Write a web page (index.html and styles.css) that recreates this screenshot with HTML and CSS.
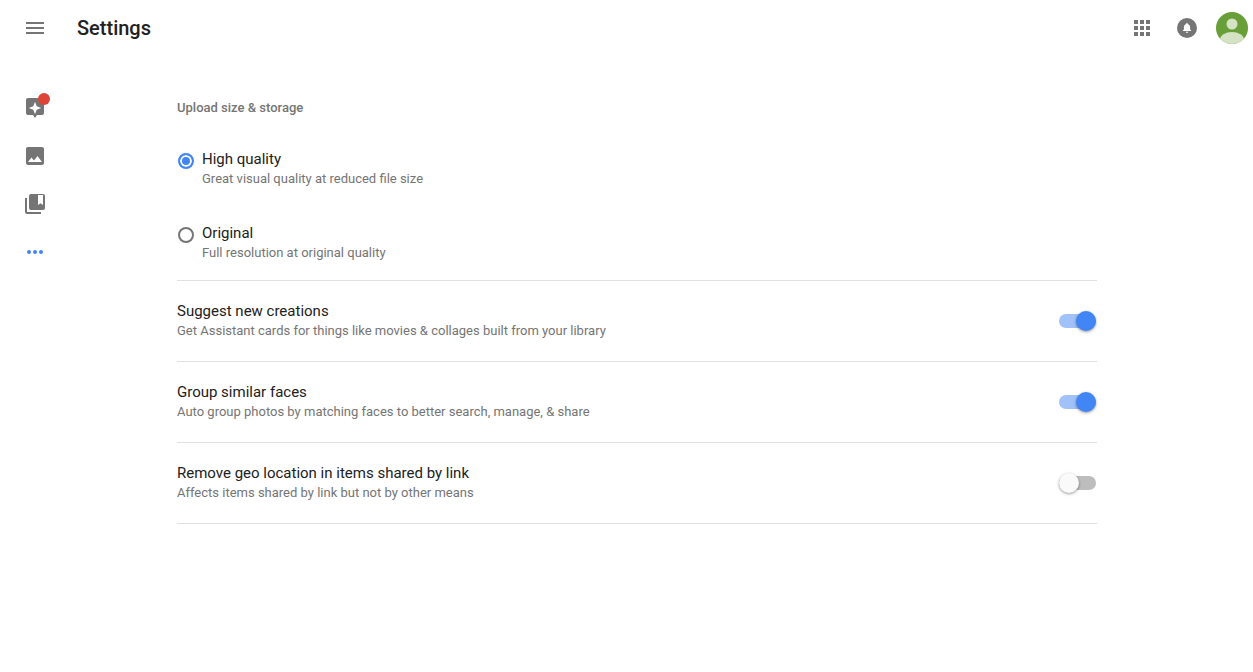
FILE: index.html
```html
<!DOCTYPE html>
<html lang="en">
<head>
<meta charset="utf-8">
<title>Settings</title>
<link rel="stylesheet" href="styles.css">
</head>
<body>
<header class="topbar">
  <button class="menu-btn" aria-label="Menu">
    <svg width="24" height="24" viewBox="0 0 24 24"><path class="ic" d="M3 18h18v-2H3v2zm0-5h18v-2H3v2zm0-7v2h18V6H3z"/></svg>
  </button>
  <h1 class="title">Settings</h1>
  <div class="actions">
    <svg class="act-apps" width="24" height="24" viewBox="0 0 24 24"><path class="ic" d="M4 8h4V4H4v4zm6 12h4v-4h-4v4zm-6 0h4v-4H4v4zm0-6h4v-4H4v4zm6 0h4v-4h-4v4zm6-10v4h4V4h-4zm-6 4h4V4h-4v4zm6 6h4v-4h-4v4zm0 6h4v-4h-4v4z"/></svg>
    <svg class="act-bell" width="24" height="24" viewBox="0 0 24 24"><circle class="ic" cx="12" cy="12" r="10"/><path fill="#fff" d="M12 6.800c-.4 0-.7.3-.7.7v.4C9.700 8.300 8.900 9.500 8.900 11.200v2.300l-1 1v.6h8.200v-.6l-1-1v-2.300c0-1.700-.8-2.900-2.400-3.300v-.4c0-.4-.3-.7-.7-.7zM12 17c.7 0 1.200-.5 1.200-1.200h-2.400c0 .7.5 1.200 1.200 1.200z"/></svg>
    <svg class="avatar" width="32" height="32" viewBox="0 0 32 32"><defs><clipPath id="av"><circle cx="16" cy="16" r="16"/></clipPath></defs><g clip-path="url(#av)"><rect width="32" height="32" fill="#689f38"/><circle cx="16" cy="12" r="5.5" fill="#d3e3c4"/><ellipse cx="16" cy="28" rx="12" ry="8" fill="#d3e3c4"/></g></svg>
  </div>
</header>
<div class="layout">
  <nav class="sidebar">
    <a class="nav-item badge-wrap">
      <svg width="24" height="24" viewBox="0 0 24 24"><path class="ic" fill-rule="evenodd" d="M5 2h14a2 2 0 0 1 2 2v13a2 2 0 0 1-2 2h-5l-2 3-2-3H5a2 2 0 0 1-2-2V4a2 2 0 0 1 2-2zm7 3.800-1.700 4.500-4.500 1.700 4.500 1.700 1.700 4.500 1.700-4.500 4.500-1.700-4.500-1.700L12 5.800z"/></svg>
      <span class="badge"></span>
    </a>
    <a class="nav-item">
      <svg width="24" height="24" viewBox="0 0 24 24"><path class="ic" d="M21 19V5c0-1.100-.9-2-2-2H5c-1.100 0-2 .9-2 2v14c0 1.100.9 2 2 2h14c1.100 0 2-.9 2-2zM8.500 13.500l2.500 3.010L14.500 12l4.500 6H5l3.500-4.500z"/></svg>
    </a>
    <a class="nav-item">
      <svg width="24" height="24" viewBox="0 0 24 24"><path class="ic" fill-rule="evenodd" d="M2 6h2v14h14v2H4a2 2 0 0 1-2-2V6zm6-4h12a2 2 0 0 1 2 2v12a2 2 0 0 1-2 2H8a2 2 0 0 1-2-2V4a2 2 0 0 1 2-2zm7 1v10l2.500-1.800L20 13V3h-5z"/></svg>
    </a>
    <a class="nav-item">
      <svg width="24" height="24" viewBox="0 0 24 24"><g fill="#4285f4"><circle cx="6" cy="12" r="2"/><circle cx="12" cy="12" r="2"/><circle cx="18" cy="12" r="2"/></g></svg>
    </a>
  </nav>
  <main class="content">
    <h2 class="section-title">Upload size &amp; storage</h2>
    <div class="radios">
      <div class="radio-row">
        <span class="radio radio-on"></span>
        <div class="text">
          <div class="primary">High quality</div>
          <div class="secondary">Great visual quality at reduced file size</div>
        </div>
      </div>
      <div class="radio-row">
        <span class="radio"></span>
        <div class="text">
          <div class="primary">Original</div>
          <div class="secondary">Full resolution at original quality</div>
        </div>
      </div>
    </div>
    <div class="row">
      <div class="text">
        <div class="primary">Suggest new creations</div>
        <div class="secondary">Get Assistant cards for things like movies &amp; collages built from your library</div>
      </div>
      <span class="toggle toggle-on"><span class="thumb"></span></span>
    </div>
    <div class="row">
      <div class="text">
        <div class="primary">Group similar faces</div>
        <div class="secondary">Auto group photos by matching faces to better search, manage, &amp; share</div>
      </div>
      <span class="toggle toggle-on"><span class="thumb"></span></span>
    </div>
    <div class="row">
      <div class="text">
        <div class="primary">Remove geo location in items shared by link</div>
        <div class="secondary">Affects items shared by link but not by other means</div>
      </div>
      <span class="toggle"><span class="thumb"></span></span>
    </div>
  </main>
</div>
</body>
</html>
```
FILE: styles.css
```css
* { box-sizing: border-box; }
html, body { margin: 0; padding: 0; background: #fff; }
body { font-family: Roboto, "Liberation Sans", sans-serif; color: #212121; overflow: hidden; }
.ic { fill: #757575; }
.topbar { display: flex; align-items: center; height: 56px; padding: 0 5px 0 23px; }
.menu-btn { display: flex; padding: 0; border: 0; background: none; margin-right: 30px; }
.title { margin: 0; font-size: 20px; font-weight: 500; line-height: 24px; color: #212121; }
.actions { margin-left: auto; display: flex; align-items: center; }
.act-apps { margin-right: 21px; }
.act-bell { margin-right: 17px; }
.avatar { display: block; }
.layout { display: flex; }
.sidebar { width: 70px; flex: none; padding-top: 28px; display: flex; flex-direction: column; }
.nav-item { position: relative; height: 48px; display: flex; align-items: center; justify-content: center; }
.badge { position: absolute; top: 9px; left: 38px; width: 12px; height: 12px; border-radius: 50%; background: #db4437; }
.content { width: 920px; margin-left: 107px; }
.section-title { margin: 0; padding-top: 43px; font-size: 13px; line-height: 18px; font-weight: 500; color: #757575; }
.radios { padding-top: 32px; padding-bottom: 18px; display: flex; flex-direction: column; gap: 35px; }
.radio-row { display: flex; align-items: flex-start; }
.radio { width: 16px; height: 16px; margin: 4px 8px 0 1px; border: 2px solid #757575; border-radius: 50%; flex: none; }
.radio-on { border-color: #4285f4; background: #4285f4; box-shadow: inset 0 0 0 2px #fff; }
.primary { font-size: 15px; line-height: 20px; color: #212121; }
.secondary { margin-top: 1px; font-size: 13px; line-height: 18px; color: #757575; }
.row { display: flex; align-items: center; justify-content: space-between; height: 81px; padding: 20px 0 21px; border-top: 1px solid #e0e0e0; }
.row:last-child { height: 82px; border-bottom: 1px solid #e0e0e0; }
.toggle { position: relative; width: 37px; height: 14px; margin: 1px 1px 0 0; border-radius: 7px; background: #bdbdbd; flex: none; }
.toggle-on { background: #a0c2f9; }
.thumb { position: absolute; top: -3px; left: 0; width: 20px; height: 20px; border-radius: 50%; background: #fafafa; box-shadow: 0 1px 3px rgba(0,0,0,.4); }
.toggle-on .thumb { left: 17px; background: #4285f4; }
```
